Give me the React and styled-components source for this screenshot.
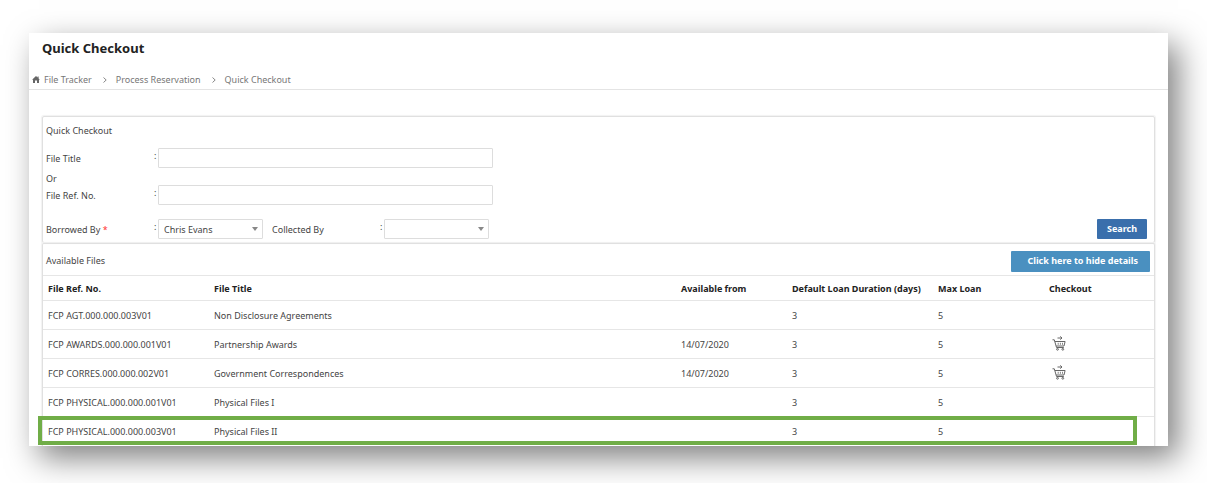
import styled, { createGlobalStyle } from "styled-components";

const GlobalStyle = createGlobalStyle`
  * {
    box-sizing: border-box;
  }

  body {
    margin: 0;
    background-color: #fff;
    color: #444;
    font-family: "Noto Sans", "Open Sans", sans-serif;
    font-size: 9px;
    line-height: 16px;
  }

  input,
  select,
  button {
    font: inherit;
    color: inherit;
  }
`;

const Page = styled.div`
  padding: 33px 39px 37px 29px;
  overflow: hidden;
`;

const Window = styled.main`
  overflow: hidden;
  background-color: #fff;
  box-shadow: 10px 12px 30px rgba(0, 0, 0, 0.5);
`;

const Title = styled.h1`
  margin: 0;
  padding: 5px 13px 0;
  color: #222;
  font-size: 13px;
  font-weight: 700;
  line-height: 20px;
`;

const Breadcrumb = styled.nav`
  display: flex;
  align-items: center;
  height: 32px;
  padding: 12px 3px 0;
  border-bottom: 1px solid #e4e4e4;
  color: #777;

  a {
    color: inherit;
    text-decoration: none;
  }
`;

const HomeIcon = styled.svg`
  width: 8px;
  height: 7px;
  margin-right: 4px;
`;

const Chevron = styled.svg`
  width: 4px;
  height: 6px;
  margin: 0 9px 0 11px;
`;

const Content = styled.div`
  padding: 26px 13px 0;
`;

const Panel = styled.section`
  border: 1px solid #e0e0e0;
  border-radius: 2px;
  box-shadow: 0 0 1px 1px #f2f2f2;
`;

const SearchPanel = styled(Panel)`
  height: 127px;
  padding: 6px 7px 3px 3px;
`;

const FilesPanel = styled(Panel)`
  border-bottom: none;
  border-radius: 2px 2px 0 0;
`;

const PanelTitle = styled.h2`
  margin: 0;
  font-size: 9px;
  font-weight: 400;
  line-height: 16px;
`;

const SearchForm = styled.form`
  display: flex;
  flex-direction: column;
  padding-top: 9px;
`;

const FormRow = styled.div`
  display: flex;
  align-items: center;
  height: 20px;
  margin-bottom: ${(props) => (props.$last ? "0" : "14px")};
`;

const Label = styled.label`
  width: 108px;
  padding-top: 2px;
`;

const Required = styled.span`
  color: #f33;
`;

const Colon = styled.span`
  width: 4px;
  padding-bottom: 4px;
`;

const Or = styled.div`
  height: 17px;
  padding-top: 3px;
`;

const TextInput = styled.input`
  width: 335px;
  height: 20px;
  padding: 0 6px;
  border: 1px solid #ddd;
  border-radius: 1px;
  background-color: #fff;
`;

const SelectWrap = styled.div`
  position: relative;
  width: 105px;
  height: 20px;
  margin-right: 9px;

  svg {
    position: absolute;
    top: 8px;
    right: 5px;
    width: 6px;
    height: 4px;
    pointer-events: none;
  }
`;

const Select = styled.select`
  width: 100%;
  height: 20px;
  padding: 2px 14px 0 5px;
  border: 1px solid #ddd;
  border-radius: 1px;
  background-color: #fff;
  appearance: none;
`;

const Button = styled.button`
  border: none;
  border-radius: 1px;
  color: #fff;
  font-weight: 700;
  cursor: pointer;
`;

const SearchButton = styled(Button)`
  width: 50px;
  height: 20px;
  margin-left: auto;
  padding: 0;
  background-color: #3a6fac;
`;

const ToggleButton = styled(Button)`
  width: 139px;
  height: 21px;
  padding: 0 12px 0 0;
  background-color: #4a90c0;
  text-align: right;
  white-space: nowrap;
`;

const FilesHeader = styled.div`
  display: flex;
  align-items: center;
  justify-content: space-between;
  height: 31px;
  padding: 3px 4px 0 3px;
`;

const Table = styled.table`
  width: 100%;
  border-collapse: collapse;
  table-layout: fixed;
`;

const HeadCell = styled.th`
  width: ${(props) => props.$width || "auto"};
  height: 25px;
  padding: 2px 0 0 5px;
  border-top: 1px solid #e6e6e6;
  color: #222;
  text-align: left;
  white-space: nowrap;
`;

const Row = styled.tr`
  position: relative;
`;

const Cell = styled.td`
  height: 29px;
  padding: 2px 0 0 5px;
  border-top: 1px solid #e6e6e6;
  white-space: nowrap;
`;

const Highlight = styled.span`
  position: absolute;
  inset: -1px 17px 1px -5px;
  border: 4px solid #70ad47;
  pointer-events: none;
`;

const CartButton = styled.button`
  display: block;
  margin-left: 3px;
  padding: 0 0 4px;
  border: none;
  background: none;
  color: #666;
  cursor: pointer;

  svg {
    display: block;
    width: 14px;
    height: 15px;
  }
`;

const columns = [
  { label: "File Ref. No.", width: "166px" },
  { label: "File Title" },
  { label: "Available from", width: "111px" },
  { label: "Default Loan Duration (days)", width: "146px" },
  { label: "Max Loan", width: "111px" },
  { label: "Checkout", width: "110px" },
];

const files = [
  { ref: "FCP AGT.000.000.003V01", title: "Non Disclosure Agreements" },
  {
    ref: "FCP AWARDS.000.000.001V01",
    title: "Partnership Awards",
    from: "14/07/2020",
  },
  {
    ref: "FCP CORRES.000.000.002V01",
    title: "Government Correspondences",
    from: "14/07/2020",
  },
  { ref: "FCP PHYSICAL.000.000.001V01", title: "Physical Files I" },
  {
    ref: "FCP PHYSICAL.000.000.003V01",
    title: "Physical Files II",
    highlighted: true,
  },
];

function Separator() {
  return (
    <Chevron viewBox="0 0 4 6" fill="none" stroke="#888" aria-hidden="true">
      <path d="M0.5 0.5 3.2 3 0.5 5.5" />
    </Chevron>
  );
}

function CartIcon() {
  return (
    <svg viewBox="0 0 14 15" fill="none" stroke="currentColor">
      <path d="M0.5 3.8h1.8l2.2 7.7h7.3M2.9 5.5h10.2l-1.1 4.5H4.2" />
      <path d="M6.2 6.8v2M8.4 6.8v2M10.5 6.8v2" strokeWidth="0.8" />
      <path d="M5.5 2h4.5M8.3 0.4 10 2 8.3 3.6" />
      <circle cx="5.5" cy="13.3" r="0.9" />
      <circle cx="10.8" cy="13.3" r="0.9" />
    </svg>
  );
}

function Dropdown({ id, options }) {
  return (
    <SelectWrap>
      <Select id={id}>
        {options.map((option) => (
          <option key={option}>{option}</option>
        ))}
      </Select>
      <svg viewBox="0 0 6 4" fill="#888" aria-hidden="true">
        <path d="M0 0h6L3 4z" />
      </svg>
    </SelectWrap>
  );
}

function Header() {
  return (
    <header>
      <Title>Quick Checkout</Title>
      <Breadcrumb>
        <HomeIcon viewBox="0 0 8 7" fill="#666" aria-hidden="true">
          <path d="M4 0 0.3 3.4 1 4v3h2V4.6h2V7h2V4l0.7-0.6L6.6 2.4V0.4h-1v1z" />
        </HomeIcon>
        <a href="#tracker">File Tracker</a>
        <Separator />
        <a href="#reservation">Process Reservation</a>
        <Separator />
        <a href="#checkout">Quick Checkout</a>
      </Breadcrumb>
    </header>
  );
}

function Search() {
  return (
    <SearchPanel>
      <PanelTitle>Quick Checkout</PanelTitle>
      <SearchForm onSubmit={(e) => e.preventDefault()}>
        <FormRow $last>
          <Label htmlFor="title">File Title</Label>
          <Colon>:</Colon>
          <TextInput id="title" />
        </FormRow>
        <Or>Or</Or>
        <FormRow>
          <Label htmlFor="ref">File Ref. No.</Label>
          <Colon>:</Colon>
          <TextInput id="ref" />
        </FormRow>
        <FormRow $last>
          <Label htmlFor="borrower">
            Borrowed By <Required>*</Required>
          </Label>
          <Colon>:</Colon>
          <Dropdown id="borrower" options={["Chris Evans"]} />
          <Label htmlFor="collector">Collected By</Label>
          <Colon>:</Colon>
          <Dropdown id="collector" options={[""]} />
          <SearchButton type="submit">Search</SearchButton>
        </FormRow>
      </SearchForm>
    </SearchPanel>
  );
}

function Files() {
  return (
    <FilesPanel>
      <FilesHeader>
        <PanelTitle>Available Files</PanelTitle>
        <ToggleButton type="button">Click here to hide details</ToggleButton>
      </FilesHeader>
      <Table>
        <thead>
          <tr>
            {columns.map((column) => (
              <HeadCell key={column.label} $width={column.width}>
                {column.label}
              </HeadCell>
            ))}
          </tr>
        </thead>
        <tbody>
          {files.map((file) => (
            <Row key={file.ref}>
              <Cell>
                {file.ref}
                {file.highlighted && <Highlight />}
              </Cell>
              <Cell>{file.title}</Cell>
              <Cell>{file.from}</Cell>
              <Cell>3</Cell>
              <Cell>5</Cell>
              <Cell>
                {file.from && (
                  <CartButton type="button" aria-label="Checkout">
                    <CartIcon />
                  </CartButton>
                )}
              </Cell>
            </Row>
          ))}
        </tbody>
      </Table>
    </FilesPanel>
  );
}

function App() {
  return (
    <>
      <GlobalStyle />
      <Page>
        <Window>
          <Header />
          <Content>
            <Search />
            <Files />
          </Content>
        </Window>
      </Page>
    </>
  );
}

export default App;
